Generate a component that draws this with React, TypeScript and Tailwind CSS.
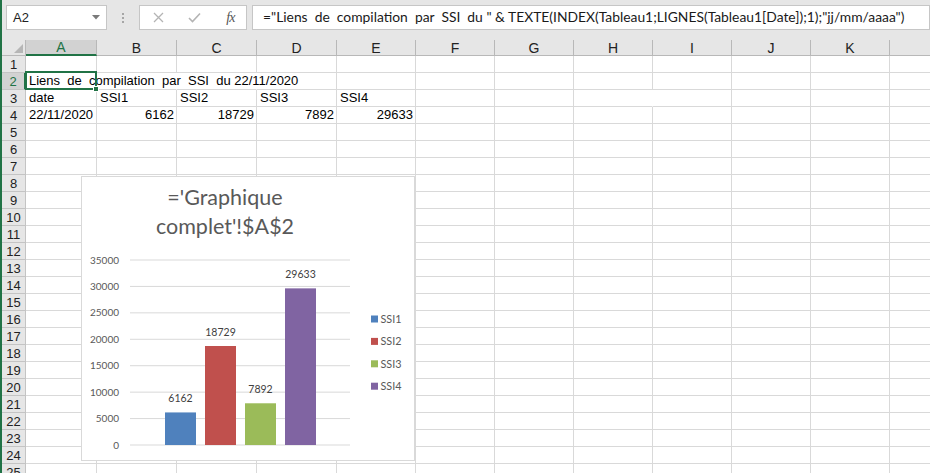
import React from 'react';

const columns = [
  { letter: 'A', width: 'w-[71px]' },
  { letter: 'B', width: 'w-[80px]' },
  { letter: 'C', width: 'w-[80px]' },
  { letter: 'D', width: 'w-[80px]' },
  { letter: 'E', width: 'w-[79px]' },
  { letter: 'F', width: 'w-[79px]' },
  { letter: 'G', width: 'w-[79px]' },
  { letter: 'H', width: 'w-[79px]' },
  { letter: 'I', width: 'w-[79px]' },
  { letter: 'J', width: 'w-[79px]' },
  { letter: 'K', width: 'w-[79px]' },
  { letter: '', width: 'w-[79px]' },
];

type Cell = { text: string; right?: boolean };

const cells: Record<string, Cell> = {
  A3: { text: 'date' },
  B3: { text: 'SSI1' },
  C3: { text: 'SSI2' },
  D3: { text: 'SSI3' },
  E3: { text: 'SSI4' },
  A4: { text: '22/11/2020' },
  B4: { text: '6162', right: true },
  C4: { text: '18729', right: true },
  D4: { text: '7892', right: true },
  E4: { text: '29633', right: true },
};

const series = [
  { name: 'SSI1', value: 6162, color: '#4f81bd' },
  { name: 'SSI2', value: 18729, color: '#c0504d' },
  { name: 'SSI3', value: 7892, color: '#9bbb59' },
  { name: 'SSI4', value: 29633, color: '#8064a2' },
];

const rows = Array.from({ length: 25 }, (_, i) => i + 1);
const ticks = [35000, 30000, 25000, 20000, 15000, 10000, 5000, 0];

// plot scale: 0 sits at y=268, 35000 at y=83
const yOf = (v: number) => 268 - (v / 35000) * 185;

function Toolbar() {
  return (
    <div className="h-[40px] shrink-0 bg-[#e6e6e6] flex items-start pt-[5px] pl-[4px]">
      {/* name box */}
      <div className="w-[101px] h-[25px] bg-white border border-[#c6c6c6] flex items-center justify-between pl-[6px] pr-[6px] text-[13px] text-[#222] font-['Liberation_Sans',Arial,sans-serif]">
        <span>A2</span>
        <svg width="8" height="5" viewBox="0 0 8 5">
          <path d="M0 0 H8 L4 4.5 Z" fill="#7a7a7a" />
        </svg>
      </div>
      <div className="w-[32px] h-[25px] flex flex-col items-center justify-center gap-[2px]">
        <div className="w-[2px] h-[2px] bg-[#a6a6a6]" />
        <div className="w-[2px] h-[2px] bg-[#a6a6a6]" />
        <div className="w-[2px] h-[2px] bg-[#a6a6a6]" />
      </div>
      {/* cancel / enter / function */}
      <div className="w-[108px] h-[25px] bg-white border border-[#c6c6c6] flex items-center">
        <div className="w-[36px] flex justify-center pl-[2px]">
          <svg width="11" height="11" viewBox="0 0 11 11">
            <path d="M1 1 L10 10 M10 1 L1 10" stroke="#b4b4b4" strokeWidth="1.3" />
          </svg>
        </div>
        <div className="w-[36px] flex justify-center pl-[4px]">
          <svg width="13" height="11" viewBox="0 0 13 11">
            <path d="M1 6 L4.5 9.5 L12 1.5" stroke="#b4b4b4" strokeWidth="1.6" fill="none" />
          </svg>
        </div>
        <div className="w-[36px] flex justify-center pl-[4px] font-['Liberation_Serif',serif] italic text-[14px] text-[#555] tracking-[-1px]">
          fx
        </div>
      </div>
      <div className="ml-[5px] flex-1 h-[25px] bg-white border border-[#c6c6c6] flex items-center pl-[10px] overflow-hidden">
        <span className="whitespace-pre text-[13.85px] text-[#1a1a1a] font-['Lato',sans-serif]">
          {'="Liens  de  compilation  par  SSI  du " & TEXTE(INDEX(Tableau1;LIGNES(Tableau1[Date]);1);"jj/mm/aaaa")'}
        </span>
      </div>
    </div>
  );
}

function HeaderRow() {
  return (
    <div className="flex h-[16px] shrink-0">
      <div className="w-[24px] shrink-0 bg-[#e6e6e6] border-r border-b border-[#b8b8b8] flex items-end justify-end p-[2px]">
        <svg width="9" height="9" viewBox="0 0 9 9">
          <path d="M9 0 V9 H0 Z" fill="#b6b6b6" />
        </svg>
      </div>
      {columns.map((c, i) =>
        c.letter === 'A' ? (
          <div
            key={i}
            className={`${c.width} shrink-0 bg-[#d2d2d2] border-r border-[#b8b8b8] border-b-2 border-b-[#217346] flex items-center justify-center text-[14px] text-[#217346] leading-none`}
          >
            {c.letter}
          </div>
        ) : (
          <div
            key={i}
            className={`${c.width} shrink-0 bg-[#e6e6e6] border-r border-b border-[#b8b8b8] flex items-center justify-center text-[14px] text-[#222] leading-none`}
          >
            {c.letter}
          </div>
        )
      )}
    </div>
  );
}

function GridRow({ row }: { row: number }) {
  const selected = row === 2;
  return (
    <div className="flex h-[17px] shrink-0">
      <div
        className={
          selected
            ? 'w-[24px] shrink-0 bg-[#d2d2d2] border-b border-b-[#c4c4c4] border-r-2 border-r-[#217346] flex items-center justify-center text-[13px] text-[#217346] leading-none'
            : 'w-[24px] shrink-0 bg-[#e6e6e6] border-r border-b border-[#c4c4c4] flex items-center justify-center text-[13px] text-[#222] leading-none'
        }
      >
        {row}
      </div>
      {columns.map((c, i) => {
        const key = `${c.letter || 'L'}${row}`;
        const cell = cells[key];
        // text in A2 spills over B2 and C2, so their right borders vanish
        const noRight = (row === 2 && (c.letter === 'A' || c.letter === 'B' || c.letter === 'C')) || key === 'H3';
        const base = noRight
          ? 'border-b border-b-[#d9d9d9] border-r border-r-transparent'
          : 'border-b border-r border-[#d9d9d9]';
        if (key === 'A2') {
          return (
            <div key={i} className={`${c.width} shrink-0 ${base} relative`}>
              <span className="absolute left-[3px] top-0 z-10 whitespace-pre text-[13px] leading-[16px] text-black">
                {'Liens  de  compilation  par  SSI  du 22/11/2020'}
              </span>
              <div className="absolute -left-[1px] -top-[2px] -right-[1px] -bottom-[1px] border-2 border-[#217346] z-20">
                <div className="absolute -right-[4px] -bottom-[4px] w-[6px] h-[6px] bg-[#217346] border border-white" />
              </div>
            </div>
          );
        }
        return (
          <div
            key={i}
            className={`${c.width} shrink-0 ${base} px-[2px] text-[13px] leading-[16px] text-black whitespace-nowrap overflow-hidden ${
              cell?.right ? 'text-right' : 'text-left pl-[3px]'
            }`}
          >
            {cell?.text}
          </div>
        );
      })}
    </div>
  );
}

function Chart() {
  return (
    <div className="absolute left-[81px] top-[176px] w-[334px] h-[285px] bg-white border border-[#d9d9d9] z-30">
      <svg width="332" height="283" viewBox="0 0 332 283" className="block font-['Lato',sans-serif]">
        <text x="143" y="28" textAnchor="middle" fontSize="21.5" fill="#595959">
          ='Graphique
        </text>
        <text x="143" y="57" textAnchor="middle" fontSize="21.5" fill="#595959">
          complet'!$A$2
        </text>
        {ticks.map((t) => (
          <g key={t}>
            <line x1="48" x2="268" y1={yOf(t)} y2={yOf(t)} stroke="#d9d9d9" strokeWidth="1" />
            <text x="37" y={yOf(t) + 3.6} textAnchor="end" fontSize="10" fill="#595959">
              {t}
            </text>
          </g>
        ))}
        {series.map((s, i) => {
          const x = 83 + i * 40;
          const top = yOf(s.value);
          return (
            <g key={s.name}>
              <rect x={x} y={top} width="31" height={268 - top} fill={s.color} />
              <text x={x + 15.5} y={top - 10.5} textAnchor="middle" fontSize="10.5" fill="#404040">
                {s.value}
              </text>
            </g>
          );
        })}
        {series.map((s, i) => {
          const cy = 142 + i * 22.4;
          return (
            <g key={`lg-${s.name}`}>
              <rect x="289" y={cy - 3.5} width="7" height="7" fill={s.color} />
              <text x="298.5" y={cy + 3.9} fontSize="10.8" fill="#595959">
                {s.name}
              </text>
            </g>
          );
        })}
      </svg>
    </div>
  );
}

export default function App() {
  return (
    <div className="relative w-[930px] h-[473px] overflow-hidden bg-white flex font-['Liberation_Sans',Arial,sans-serif]">
      <div className="w-[2px] shrink-0 bg-[#217346]" />
      <div className="flex-1 flex flex-col min-w-0">
        <Toolbar />
        <HeaderRow />
        {rows.map((r) => (
          <GridRow key={r} row={r} />
        ))}
      </div>
      <Chart />
    </div>
  );
}
